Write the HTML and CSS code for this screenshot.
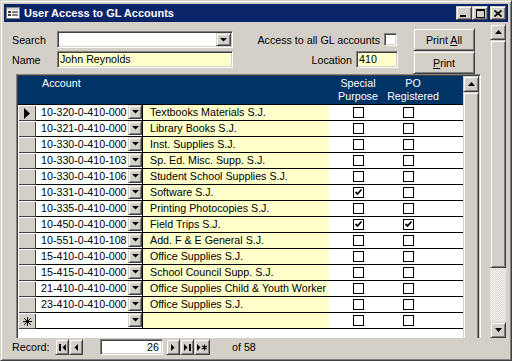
FILE: index.html
```html
<!DOCTYPE html>
<html lang="en">
<head>
    <meta charset="UTF-8">
    <title>User Access to GL Accounts</title>
    <link rel="stylesheet" href="styles.css">
</head>
<body>

<div class="window">
    <div class="titlebar">
        <svg class="app-icon" width="16" height="16" viewBox="0 0 16 16">
            <rect x="1.5" y="2.5" width="13" height="11" fill="#fff" stroke="#808080"/>
            <rect x="2" y="3" width="12" height="2" fill="#d4d0c8"/>
            <rect x="3" y="6" width="3" height="2" fill="#404040"/>
            <rect x="7" y="6" width="6" height="2" fill="#808080"/>
            <rect x="3" y="9" width="3" height="2" fill="#404040"/>
            <rect x="7" y="9" width="6" height="2" fill="#808080"/>
        </svg>
        <span class="title">User Access to GL Accounts</span>
        <div class="caption-buttons">
            <span class="cap-btn raised">
                <svg width="8" height="8" viewBox="0 0 8 8"><rect x="0" y="6" width="6" height="2"/></svg>
            </span>
            <span class="cap-btn raised">
                <svg width="9" height="9" viewBox="0 0 9 9"><path d="M0 0h9v9H0z M1 2v6h7V2z" fill-rule="evenodd"/></svg>
            </span>
            <span class="cap-btn raised close">
                <svg width="8" height="7" viewBox="0 0 8 7"><path d="M0.5 0.5l7 6M7.5 0.5l-7 6" stroke="#000" stroke-width="1.6"/></svg>
            </span>
        </div>
    </div>

    <div class="client">
        <div class="main">
            <div class="form">
                <div class="form-header">
                    <div class="fields">
                        <span class="label">Search</span>
                        <div class="combo sunken">
                            <span class="combo-text"></span>
                            <span class="drop-btn raised">
                                <svg width="7" height="4" viewBox="0 0 7 4"><path d="M0 0h7L3.5 3.5z"/></svg>
                            </span>
                        </div>
                        <span class="label">Name</span>
                        <div class="textbox sunken yellow">John Reynolds</div>
                    </div>

                    <div class="options">
                        <div class="opt-row access">
                            <span>Access to all GL accounts</span>
                            <span class="check-3d sunken"></span>
                        </div>
                        <div class="opt-row">
                            <span>Location</span>
                            <div class="textbox sunken yellow location">410</div>
                        </div>
                    </div>

                    <div class="print-buttons">
                        <button class="btn raised">Print <u>A</u>ll</button>
                        <button class="btn raised"><u>P</u>rint</button>
                    </div>
                </div>

                <div class="subform">
                    <div class="grid">
                        <div class="grid-head">
                            <span class="head-account">Account</span>
                            <span class="head-check">Special<br>Purpose</span>
                            <span class="head-check">PO<br>Registered</span>
                        </div>
                        <div class="grid-rows" id="grid-rows"></div>
                    </div>
                    <div class="vscroll inner">
                        <span class="scroll-btn raised">
                            <svg width="7" height="4" viewBox="0 0 7 4"><path d="M3.5 0L7 4H0z"/></svg>
                        </span>
                        <span class="thumb raised"></span>
                    </div>
                </div>
            </div>

            <div class="vscroll outer">
                <span class="scroll-btn raised">
                    <svg width="7" height="4" viewBox="0 0 7 4"><path d="M3.5 0L7 4H0z"/></svg>
                </span>
                <span class="thumb raised"></span>
                <span class="track"></span>
                <span class="scroll-btn raised">
                    <svg width="7" height="4" viewBox="0 0 7 4"><path d="M0 0h7L3.5 4z"/></svg>
                </span>
            </div>
        </div>

        <div class="navbar">
            <span class="nav-label">Record:</span>
            <span class="nav-btn raised">
                <svg width="7" height="7" viewBox="0 0 7 7"><rect x="0" y="0" width="2" height="7"/><path d="M7 0v7L3.5 3.5z"/></svg>
            </span>
            <span class="nav-btn raised">
                <svg width="4" height="7" viewBox="0 0 4 7"><path d="M4 0v7L0.5 3.5z"/></svg>
            </span>
            <span class="nav-box sunken">26</span>
            <span class="nav-btn raised">
                <svg width="4" height="7" viewBox="0 0 4 7"><path d="M0 0v7L3.5 3.5z"/></svg>
            </span>
            <span class="nav-btn raised">
                <svg width="7" height="7" viewBox="0 0 7 7"><path d="M0 0v7L3.5 3.5z"/><rect x="5" y="0" width="2" height="7"/></svg>
            </span>
            <span class="nav-btn raised wide">
                <svg width="10" height="7" viewBox="0 0 10 7"><path d="M0 0v7L3.5 3.5z"/><path d="M7.5 0.5v6M5 2l5 3M10 2l-5 3" stroke="#000" stroke-width="1.1"/></svg>
            </span>
            <span class="nav-of">of 58</span>
        </div>
    </div>
</div>

<script>
    const accounts = [
        ['10-320-0-410-000', 'Textbooks Materials S.J.', false, false],
        ['10-321-0-410-000', 'Library Books S.J.', false, false],
        ['10-330-0-410-000', 'Inst. Supplies S.J.', false, false],
        ['10-330-0-410-103', 'Sp. Ed. Misc. Supp. S.J.', false, false],
        ['10-330-0-410-106', 'Student School Supplies S.J.', false, false],
        ['10-331-0-410-000', 'Software S.J.', true, false],
        ['10-335-0-410-000', 'Printing Photocopies S.J.', false, false],
        ['10-450-0-410-000', 'Field Trips S.J.', true, true],
        ['10-551-0-410-108', 'Add. F & E General S.J.', false, false],
        ['15-410-0-410-000', 'Office Supplies S.J.', false, false],
        ['15-415-0-410-000', 'School Council Supp. S.J.', false, false],
        ['21-410-0-410-000', 'Office Supplies Child & Youth Worker', false, false],
        ['23-410-0-410-000', 'Office Supplies S.J.', false, false],
        ['', '', false, false]
    ];

    const arrow = '<svg width="7" height="4" viewBox="0 0 7 4"><path d="M0 0h7L3.5 3.5z"/></svg>';
    const tick = '<svg width="9" height="9" viewBox="0 0 9 9"><path d="M1.5 4l2 2 4-4.5" fill="none" stroke="#000" stroke-width="1.8"/></svg>';
    const current = '<svg width="6" height="11" viewBox="0 0 6 11"><path d="M0 0l6 5.5L0 11z"/></svg>';
    const star = '<svg width="9" height="9" viewBox="0 0 9 9"><path d="M4.5 0v9M0 4.5h9M1.2 1.2l6.6 6.6M7.8 1.2l-6.6 6.6" stroke="#000" stroke-width="1"/></svg>';

    function checkBox(on) {
        return `<span class="chk">${on ? tick : ''}</span>`;
    }

    function loadRows() {
        const rows = document.getElementById('grid-rows');
        let html = '';

        accounts.forEach((item, i) => {
            let marker = '';
            if (i === 0) marker = current;
            if (i === accounts.length - 1) marker = star;

            html += `
                <div class="row">
                    <div class="selector">${marker}</div>
                    <div class="acct">${item[0]}</div>
                    <div class="acct-btn"><span class="drop-btn raised">${arrow}</span></div>
                    <div class="desc">${item[1].replace('&', '&amp;')}</div>
                    <div class="chk-area">
                        <div class="chk-cell">${checkBox(item[2])}</div>
                        <div class="chk-cell">${checkBox(item[3])}</div>
                    </div>
                </div>`;
        });

        rows.innerHTML = html;
    }

    loadRows();
</script>

</body>
</html>
```

FILE: styles.css
```css
body {
    margin: 0;
    padding: 0;
    font-family: "Liberation Sans", Arial, sans-serif;
    font-size: 10.7px;
    color: #000;
    background-color: #d4d0c8;
}

/* 3D edges, Windows classic */
.raised {
    box-sizing: border-box;
    background-color: #d4d0c8;
    border: 1px solid;
    border-color: #d4d0c8 #404040 #404040 #d4d0c8;
    box-shadow: inset 1px 1px #fff, inset -1px -1px #808080;
}

.sunken {
    box-sizing: border-box;
    border: 1px solid;
    border-color: #808080 #fff #fff #808080;
    box-shadow: inset 1px 1px #404040, inset -1px -1px #d4d0c8;
}

.window {
    width: 512px;
    height: 361px;
    box-sizing: border-box;
    padding: 3px;
    display: flex;
    flex-direction: column;
    background-color: #d4d0c8;
    border: 1px solid;
    border-color: #d4d0c8 #404040 #404040 #d4d0c8;
    box-shadow: inset 1px 1px #fff, inset -1px -1px #808080;
}

.titlebar {
    height: 18px;
    flex-shrink: 0;
    display: flex;
    align-items: center;
    background-color: #0a246a;
    color: white;
}

.app-icon {
    margin-left: 1px;
}

.title {
    margin-left: 3px;
    font-size: 11px;
    font-weight: bold;
}

.caption-buttons {
    margin-left: auto;
    margin-right: 2px;
    display: flex;
}

.cap-btn {
    width: 16px;
    height: 14px;
    display: flex;
    align-items: center;
    justify-content: center;
}

.cap-btn.close {
    margin-left: 2px;
}

.client {
    flex: 1;
    padding: 2px 2px 1px;
    display: flex;
    flex-direction: column;
    min-height: 0;
}

.main {
    height: 314px;
    flex-shrink: 0;
    display: flex;
    overflow: hidden;
}

.form {
    flex: 1;
    min-width: 0;
}

/* top section */
.form-header {
    height: 50px;
    display: flex;
    align-items: flex-start;
}

.fields {
    margin: 7px 0 0 6px;
    display: grid;
    grid-template-columns: 45px 176px;
    grid-auto-rows: 17px;
    row-gap: 3px;
    align-items: center;
}

.combo {
    height: 17px;
    display: flex;
    align-items: stretch;
    background-color: white;
    padding: 1px;
}

.combo-text {
    flex: 1;
}

.drop-btn {
    width: 15px;
    display: flex;
    align-items: center;
    justify-content: center;
}

.textbox {
    height: 17px;
    line-height: 15px;
    padding-left: 2px;
    white-space: nowrap;
}

.yellow {
    background-color: #ffffcc;
}

.options {
    width: 141px;
    margin: 7px 0 0 24px;
    display: flex;
    flex-direction: column;
    row-gap: 3px;
}

.opt-row {
    height: 17px;
    display: flex;
    align-items: center;
    justify-content: flex-end;
    gap: 4px;
    white-space: nowrap;
}

.opt-row.access {
    padding-right: 1px;
}

.check-3d {
    width: 13px;
    height: 13px;
    flex-shrink: 0;
    background-color: white;
}

.location {
    width: 42px;
}

.print-buttons {
    margin: 4px 0 0 15px;
    display: flex;
    flex-direction: column;
}

.btn {
    width: 62px;
    height: 23px;
    padding: 0;
    font-family: inherit;
    font-size: 10.7px;
    color: #000;
}

/* subform / datasheet */
.subform {
    margin-left: 10px;
    width: 465px;
    height: 300px;
    box-sizing: border-box;
    padding: 1px;
    display: flex;
    border: 1px solid;
    border-color: #808080 #fff #fff #808080;
    box-shadow: inset 1px 1px #404040, inset -1px -1px #d4d0c8;
}

.grid {
    flex: 1;
    min-width: 0;
    background-color: white;
}

.grid-head {
    height: 28px;
    box-sizing: border-box;
    padding-top: 1px;
    display: grid;
    grid-template-columns: 24px 288px 56px 54px;
    line-height: 13px;
    background-color: #003366;
    color: white;
}

.head-account {
    grid-column: 2;
}

.head-check {
    text-align: center;
    white-space: nowrap;
}

.grid-rows {
    border-top: 1px solid #000;
}

.row {
    height: 16px;
    display: flex;
    line-height: 15px;
    white-space: nowrap;
}

.row > div {
    box-sizing: border-box;
}

.selector {
    width: 18px;
    display: flex;
    align-items: center;
    justify-content: center;
    background-color: #d4d0c8;
    box-shadow: inset 1px 1px #fff, inset -1px -1px #404040;
}

.acct {
    width: 92px;
    padding-left: 5px;
    border-bottom: 1px solid #000;
    overflow: hidden;
}

.acct-btn {
    width: 14px;
    border-bottom: 1px solid #000;
    display: flex;
}

.acct-btn .drop-btn {
    width: 14px;
    height: 14px;
}

.desc {
    width: 187px;
    padding-left: 7px;
    border-left: 1px solid #000;
    border-bottom: 1px solid #000;
    background-color: #ffffcc;
    overflow: hidden;
}

.chk-area {
    flex: 1;
    padding-left: 4px;
    display: flex;
    border-bottom: 1px solid #000;
}

.chk-cell {
    width: 50px;
    display: flex;
    align-items: center;
    justify-content: center;
}

.chk {
    width: 11px;
    height: 11px;
    box-sizing: border-box;
    border: 1px solid #000;
    background-color: white;
    display: flex;
    align-items: center;
    justify-content: center;
}

/* scrollbars */
.vscroll {
    width: 16px;
    flex-shrink: 0;
    display: flex;
    flex-direction: column;
}

.scroll-btn {
    height: 16px;
    flex-shrink: 0;
    display: flex;
    align-items: center;
    justify-content: center;
}

.vscroll.outer .thumb {
    height: 228px;
    flex-shrink: 0;
}

.vscroll.inner .thumb {
    flex: 1;
}

.track {
    flex: 1;
    background: repeating-conic-gradient(#d4d0c8 0 25%, #fff 0 50%) 0 0 / 2px 2px;
}

/* record navigation */
.navbar {
    height: 18px;
    flex-shrink: 0;
    padding-left: 6px;
    display: flex;
    align-items: center;
}

.nav-label {
    width: 43px;
}

.nav-btn {
    width: 14px;
    height: 16px;
    display: flex;
    align-items: center;
    justify-content: center;
}

.nav-btn.wide {
    width: 16px;
}

.nav-box {
    width: 63px;
    height: 16px;
    margin: 0 3px 0 17px;
    padding-right: 3px;
    line-height: 14px;
    text-align: right;
    background-color: white;
}

.nav-of {
    margin-left: 22px;
}
```
